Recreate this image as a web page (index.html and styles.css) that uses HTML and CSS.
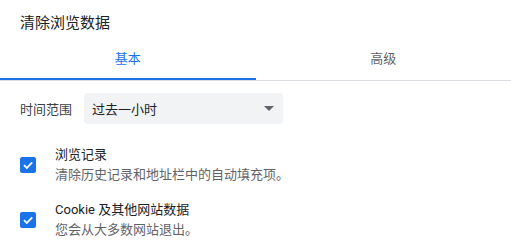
FILE: index.html
```html
<!DOCTYPE html>
<html>
<head>
    <title>清除浏览数据</title>
    <link rel="stylesheet" href="styles.css">
</head>
<body>
    <div class="dialog">
        <div class="title">清除浏览数据</div>

        <div class="tabs">
            <div class="tab active">基本</div>
            <div class="tab">高级</div>
        </div>

        <div class="content">
            <div class="range">
                <span class="range-label">时间范围</span>
                <div class="select">
                    <span>过去一小时</span>
                    <span class="arrow"></span>
                </div>
            </div>

            <div class="options">
                <div class="option">
                    <span class="checkbox">
                        <svg width="12" height="12" viewBox="0 0 12 12"><path d="M2 6.2 L4.8 9 L10.2 3.4" fill="none" stroke="#fff" stroke-width="1.8"/></svg>
                    </span>
                    <div class="option-text">
                        <div class="option-title">浏览记录</div>
                        <div class="option-desc">清除历史记录和地址栏中的自动填充项。</div>
                    </div>
                </div>

                <div class="option">
                    <span class="checkbox">
                        <svg width="12" height="12" viewBox="0 0 12 12"><path d="M2 6.2 L4.8 9 L10.2 3.4" fill="none" stroke="#fff" stroke-width="1.8"/></svg>
                    </span>
                    <div class="option-text">
                        <div class="option-title">Cookie 及其他网站数据</div>
                        <div class="option-desc">您会从大多数网站退出。</div>
                    </div>
                </div>
            </div>
        </div>
    </div>
</body>
</html>
```

FILE: styles.css
```css
body {
    margin: 0;
    font-family: Roboto, "Noto Sans CJK SC", sans-serif;
    background-color: #ffffff;
    color: #202124;
}

.dialog {
    width: 511px;
    height: 246px;
    overflow: hidden;
}

.title {
    padding: 13px 20px 0;
    font-size: 15px;
    line-height: 20px;
}

.tabs {
    display: flex;
    border-bottom: 1px solid #dadce0;
}

.tab {
    flex: 1;
    text-align: center;
    font-size: 13px;
    line-height: 20px;
    padding: 16px 0 9px;
    border-bottom: 2px solid transparent;
    color: #5f6368;
}

.tab.active {
    color: #1a73e8;
    border-bottom-color: #1a73e8;
}

.content {
    padding: 12px 20px 0;
}

.range {
    display: flex;
    align-items: center;
    font-size: 13px;
}

.range-label {
    width: 64px;
    color: #3c4043;
}

.select {
    width: 199px;
    height: 31px;
    box-sizing: border-box;
    padding: 0 9px 0 8px;
    background-color: #f1f3f4;
    border-radius: 4px;
    display: flex;
    align-items: center;
    justify-content: space-between;
}

.arrow {
    width: 0;
    height: 0;
    border-left: 5px solid transparent;
    border-right: 5px solid transparent;
    border-top: 5px solid #5f6368;
}

.options {
    margin-top: 21px;
    display: flex;
    flex-direction: column;
    gap: 15px;
}

.option {
    display: flex;
    align-items: center;
}

.checkbox {
    width: 16px;
    height: 16px;
    border-radius: 2px;
    background-color: #1a73e8;
    display: flex;
    align-items: center;
    justify-content: center;
    margin-right: 19px;
}

.option-text {
    font-size: 13px;
    line-height: 20px;
}

.option-desc {
    color: #5f6368;
}
```
